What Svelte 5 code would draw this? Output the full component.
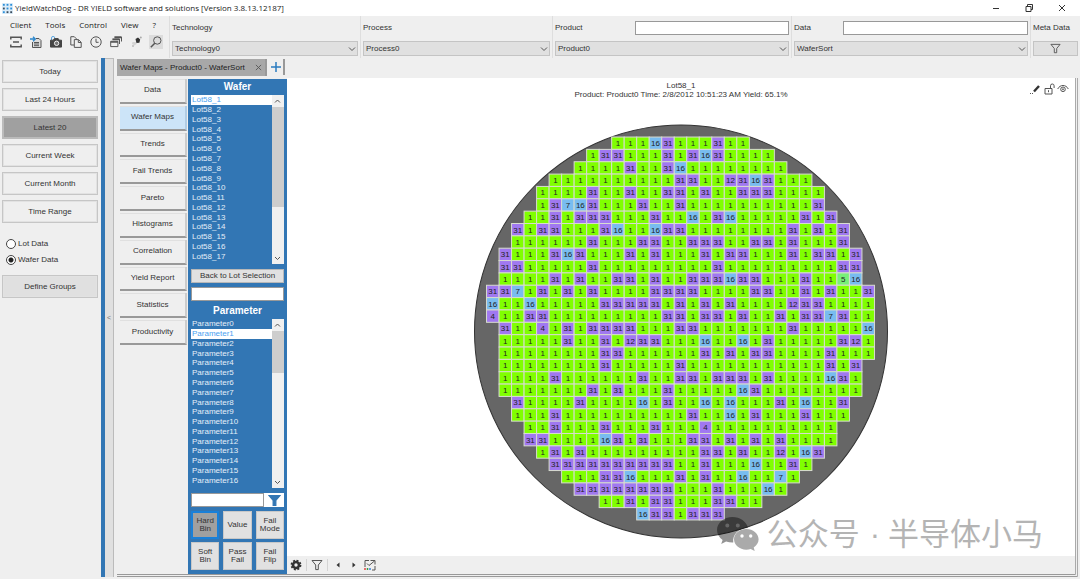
<script lang="ts">
	const menus = ['Client', 'Tools', 'Control', 'View', '?'];
	const ranges = ['Today', 'Last 24 Hours', 'Latest 20', 'Current Week', 'Current Month', 'Time Range'];
	const pages = [
		'Data',
		'Wafer Maps',
		'Trends',
		'Fail Trends',
		'Pareto',
		'Histograms',
		'Correlation',
		'Yield Report',
		'Statistics',
		'Productivity'
	];
	const modes = ['Hard Bin', 'Value', 'Fail Mode', 'Soft Bin', 'Pass Fail', 'Fail Flip'];

	const filters = [
		{ label: 'Technology', value: 'Technology0', search: false },
		{ label: 'Process', value: 'Process0', search: false },
		{ label: 'Product', value: 'Product0', search: true },
		{ label: 'Data', value: 'WaferSort', search: true }
	];

	const wafers = Array.from({ length: 18 }, (_, i) => `Lot58_${i + 1}`);
	const parameters = Array.from({ length: 18 }, (_, i) => `Parameter${i}`);

	let range = $state('Latest 20');
	let page = $state('Wafer Maps');
	let mode = $state('Hard Bin');
	let wafer = $state('Lot58_1');
	let parameter = $state('Parameter1');
	let level = $state('wafer');

	// hard bins per row, [first column, bins]
	const rows: [number, string][] = [
		[10, '1 1 1 16 31 1 1 1 31 1 1'],
		[8, '1 31 31 1 1 1 31 1 31 16 31 1 1 1 1'],
		[7, '1 1 1 1 31 1 1 31 16 1 1 1 1 1 1 1 1'],
		[5, '1 1 1 1 1 1 1 1 1 1 31 31 1 1 12 31 16 31 1 1 1'],
		[4, '1 1 1 1 31 1 1 31 1 1 31 31 1 31 1 1 31 31 31 1 1 1 1'],
		[4, '1 31 7 16 31 1 1 1 31 1 1 31 1 1 1 1 1 1 1 1 1 1 31'],
		[3, '1 1 31 1 31 31 31 1 1 1 31 1 1 16 1 31 16 1 1 1 1 1 31 1 31'],
		[2, '31 1 31 31 1 1 1 31 16 1 1 16 31 31 1 1 1 1 1 1 1 1 31 1 31 1 31'],
		[2, '1 1 1 1 1 1 31 1 1 1 31 31 1 1 31 31 31 1 1 31 31 1 31 1 1 1 31'],
		[1, '31 1 1 1 31 16 31 1 1 1 31 1 31 1 1 1 31 1 31 31 1 1 1 31 1 31 31 1 31'],
		[1, '31 31 1 1 1 1 1 31 1 1 1 1 1 1 1 1 1 31 1 1 1 1 1 1 1 1 1 31 31'],
		[1, '1 1 1 1 31 1 31 1 1 31 31 1 31 1 1 31 31 31 16 31 31 1 1 1 31 1 1 5 16'],
		[0, '31 31 7 1 31 1 31 1 31 1 1 1 1 31 31 31 31 1 1 1 1 31 31 1 1 31 1 31 1 1 31'],
		[0, '16 1 1 16 1 1 1 1 1 31 31 31 31 31 1 31 1 31 1 31 1 1 1 1 12 31 31 1 1 1 1'],
		[0, '4 1 1 31 31 1 1 1 1 1 1 1 1 1 31 31 1 31 31 1 31 1 1 31 1 31 31 7 31 1 1'],
		[1, '31 1 1 4 1 31 1 31 31 31 31 1 1 1 31 31 1 1 1 1 1 1 1 31 1 1 1 1 1 16'],
		[1, '1 1 1 1 1 31 1 1 31 1 12 31 31 1 1 1 16 1 1 16 1 31 1 1 1 1 1 31 12 1'],
		[1, '1 1 1 1 1 1 1 1 31 31 1 1 1 1 1 1 31 1 31 1 31 31 1 1 1 1 31 1 1 1'],
		[1, '1 1 1 1 1 1 1 1 31 1 1 1 1 1 31 1 1 1 1 1 1 1 1 1 1 1 31 1 31'],
		[1, '1 1 1 1 31 1 1 1 1 1 1 31 1 1 31 31 1 31 31 31 1 31 1 1 1 1 16 31 1'],
		[1, '1 1 1 1 1 1 1 31 1 31 1 1 1 31 1 1 1 1 1 16 31 1 1 1 1 1 1 1 1'],
		[2, '31 1 1 1 1 31 1 1 1 1 16 1 31 1 1 16 1 16 1 1 1 31 1 16 1 1 31'],
		[2, '1 1 1 31 1 1 1 1 1 1 1 1 1 1 31 1 1 16 1 31 1 1 1 31 1 1 1'],
		[3, '1 1 31 1 1 1 31 1 1 1 31 1 1 1 4 1 1 1 1 1 1 1 1 1 1'],
		[3, '31 31 1 1 1 1 16 31 1 31 1 1 1 31 31 1 31 1 31 1 31 1 1 1 1'],
		[4, '1 31 1 31 1 1 1 1 1 1 1 1 1 31 31 1 31 1 1 12 1 16 31'],
		[5, '31 31 31 31 31 31 31 31 31 31 1 1 31 1 1 1 16 1 1 31 1'],
		[6, '1 1 1 31 31 16 1 1 1 31 1 31 1 1 16 1 1 7 1'],
		[7, '31 31 31 31 31 31 31 31 1 1 1 31 1 1 1 16 1'],
		[9, '1 1 31 1 31 31 1 1 1 31 31 1 1'],
		[12, '16 31 31 1 31 31 31']
	];

	const binColors: Record<string, string> = {
		'1': '#80ff00',
		'4': '#a078f0',
		'5': '#78f078',
		'7': '#78bcf0',
		'12': '#a078f0',
		'16': '#78bcf0',
		'31': '#a078f0'
	};

	const DIE_W = 387 / 31;
	const DIE_H = 382 / 31;

	const dies = rows.flatMap(([first, bins], row) =>
		bins.split(' ').map((bin, i) => ({
			bin,
			x: 13 + (first + i) * DIE_W,
			y: 13 + row * DIE_H
		}))
	);
</script>

{#snippet funnel()}
	<svg class="icon" viewBox="0 0 12 12"><path d="M1 1.5h10L7.3 6v4.6H4.7V6z" /></svg>
{/snippet}

{#snippet scrollbar(thumb: number)}
	<div class="scrollbar">
		<svg viewBox="0 0 11 12"><path d="M3 7.5 5.5 5 8 7.5" /></svg>
		<div class="track"><div class="thumb" style="height: {thumb}%"></div></div>
		<svg viewBox="0 0 11 12"><path d="M3 5 5.5 7.5 8 5" /></svg>
	</div>
{/snippet}

<div class="app">
	<header class="titlebar">
		<svg class="logo" viewBox="0 0 12 12">
			<rect width="12" height="12" fill="#dcecf8" />
			<g fill="#2d8fd8">
				<rect x="1" y="1" width="2" height="2" /><rect x="5" y="1" width="2" height="2" />
				<rect x="9" y="1" width="2" height="2" /><rect x="5" y="5" width="2" height="2" />
				<rect x="9" y="5" width="2" height="2" /><rect x="1" y="9" width="2" height="2" />
			</g>
			<g fill="#3a4a5a">
				<rect x="1" y="5" width="2" height="2" /><rect x="5" y="9" width="2" height="2" />
				<rect x="9" y="9" width="2" height="2" />
			</g>
		</svg>
		<h1>YieldWatchDog - DR YIELD software and solutions [Version 3.8.13.12187]</h1>
		<div class="window-buttons">
			<button aria-label="Minimize"><svg viewBox="0 0 8 8"><path d="M1 4.5h6" /></svg></button>
			<button aria-label="Restore">
				<svg viewBox="0 0 8 8"><path d="M1 2.5h5v5H1zM2.5 2.5v-2h5v5H6" /></svg>
			</button>
			<button aria-label="Close"><svg viewBox="0 0 8 8"><path d="m1 1 6 6M7 1 1 7" /></svg></button>
		</div>
	</header>

	<div class="ribbon">
		<div class="commands">
			<nav class="menus">
				{#each menus as menu}
					<button>{menu}</button>
				{/each}
			</nav>
			<div class="toolbar">
				<button aria-label="Layout">
					<svg viewBox="0 0 12 12" stroke-width="1.5"><path d="M.8 3.6V1.2h10.4v2.4M3 6h6M.8 8.4v2.4h10.4V8.4" /></svg>
				</button>
				<button aria-label="Import">
					<svg viewBox="0 0 12 12">
						<path d="M6 2.5h3l2 2v7H2.5V6" fill="#ddd" />
						<path d="M4 6.5h5M4 8h5M4 9.7h5" />
						<path d="M0 3h5M3 .8 5.3 3 3 5.2" stroke="#2b86cc" stroke-width="1.3" />
					</svg>
				</button>
				<button aria-label="Snapshot">
					<svg viewBox="0 0 12 12">
						<path d="M1.5 4V2a1.5 1.5 0 0 1 3.2 0" stroke="#5aa5e0" />
						<path d="M.5 4.2h2.8l1-1.6h3.9l1 1.6h2.3v6.9H.5z" fill="#444" stroke="#444" />
						<circle cx="6.6" cy="7.3" r="2.2" fill="#777" stroke="#efefef" />
					</svg>
				</button>
				<button aria-label="Copy">
					<svg viewBox="0 0 12 12">
						<path d="M4 9H.8V.7h3.5l2.2 2.2v1" />
						<path d="M4.3 3.6h4.2l2.7 2.7v5.1H4.3zM8.3 3.8v2.7h2.7" fill="#efefef" />
					</svg>
				</button>
				<button aria-label="History">
					<svg viewBox="0 0 12 12"><circle cx="6" cy="6" r="5.2" /><path d="M6 2.7v3.6h2.6" /></svg>
				</button>
				<button aria-label="Windows">
					<svg viewBox="0 0 12 12">
						<path d="M4.5 1h7v4.5M2.5 3h7v5" />
						<path d="M.7 5.3h7.2v5.3H.7z" fill="#efefef" /><path d="M.7 6h7.2M4.5 1.4h7M2.5 3.5h7" stroke-width="1.6" />
					</svg>
				</button>
				<button aria-label="Highlight">
					<svg viewBox="0 0 12 12">
						<g stroke="none">
							<path d="M5.5 3 8 1.5l2.2 2-.8 3.200-3 .3z" fill="#333" />
							<path d="M2.5 6h3L7 7.500 4.500 9.500 2 8z" fill="#d4d4d4" />
							<circle cx="3" cy="10" r="1" fill="#bbb" /><circle cx="10.8" cy="1.6" r="1" fill="#aaa" />
						</g>
					</svg>
				</button>
				<button class="pressed" aria-label="Search">
					<svg viewBox="0 0 12 12"><circle cx="7.3" cy="4.5" r="3.7" /><path d="M4.8 7.2.8 11.2" stroke-width="1.5" /></svg>
				</button>
			</div>
		</div>

		{#each filters as filter}
			<div class="filter">
				<div class="filter-head" class:short={filter.label.length < 5}>
					<label for="select-{filter.label}">{filter.label}</label>
					{#if filter.search}
						<input type="text" aria-label="Search {filter.label}" />
					{/if}
				</div>
				<div class="select">
					<select id="select-{filter.label}">
						<option>{filter.value}</option>
					</select>
					<svg viewBox="0 0 8 8"><path d="m1 2.5 3 3 3-3" /></svg>
				</div>
			</div>
		{/each}
		<div class="filter">
			<div class="filter-head"><span>Meta Data</span></div>
			<button class="meta" aria-label="Filter meta data">{@render funnel()}</button>
		</div>
	</div>

	<div class="body">
		<aside class="sidebar">
			{#each ranges as item}
				<button class:active={range === item} onclick={() => (range = item)}>{item}</button>
			{/each}
			<div class="levels">
				<label><input type="radio" name="level" value="lot" bind:group={level} />Lot Data</label>
				<label><input type="radio" name="level" value="wafer" bind:group={level} />Wafer Data</label>
			</div>
			<button class="groups">Define Groups</button>
		</aside>

		<button class="splitter" aria-label="Collapse sidebar">&lt;</button>

		<main>
			<div class="tabs">
				<div class="tab">
					<span>Wafer Maps - Product0 - WaferSort</span>
					<button aria-label="Close tab"><svg viewBox="0 0 8 8"><path d="m1 1 6 6M7 1 1 7" /></svg></button>
				</div>
				<button class="add" aria-label="New tab"><svg viewBox="0 0 10 10"><path d="M5 0v10M0 5h10" /></svg></button>
			</div>

			<div class="pane">
				<nav class="pages">
					{#each pages as item}
						<button class:active={page === item} onclick={() => (page = item)}>{item}</button>
					{/each}
				</nav>

				<section class="selection">
					<h2>Wafer</h2>
					<div class="listbox">
						<ul>
							{#each wafers as item}
								<li><button class:active={wafer === item} onclick={() => (wafer = item)}>{item}</button></li>
							{/each}
						</ul>
						{@render scrollbar(69)}
					</div>
					<button class="back">Back to Lot Selection</button>
					<input type="text" aria-label="Search wafer" />
					<h2 class="second">Parameter</h2>
					<div class="listbox">
						<ul>
							{#each parameters as item}
								<li>
									<button class:active={parameter === item} onclick={() => (parameter = item)}>{item}</button>
								</li>
							{/each}
						</ul>
						{@render scrollbar(29)}
					</div>
					<div class="param-search">
						<input type="text" aria-label="Search parameter" />
						<button aria-label="Filter parameters">{@render funnel()}</button>
					</div>
					<div class="modes">
						{#each modes as item}
							<button class:active={mode === item} onclick={() => (mode = item)}>{item}</button>
						{/each}
					</div>
				</section>

				<section class="chart">
					<div class="canvas">
						<div class="caption">
							<div>{wafer}</div>
							<div>Product: Product0 Time: 2/8/2012 10:51:23 AM Yield: 65.1%</div>
						</div>
						<div class="chart-tools">
							<button aria-label="Edit">
								<svg viewBox="0 0 12 12"><path d="M1 10.5h1M3 10.5h1" /><path d="m5 8.5 5-5.5" stroke="#333" stroke-width="2.4" /></svg>
							</button>
							<button aria-label="Unlock">
								<svg viewBox="0 0 12 12"><path d="M2 5.5h7v5.5H2zM5.5 7.2v2M7.5 5.5V2.8a1.8 1.8 0 0 1 3.6 0V5" /></svg>
							</button>
							<button aria-label="Show">
								<svg viewBox="0 0 12 12"><path d="M.7 6C3 1.3 9 1.3 11.3 6" /><circle cx="6" cy="6.3" r="2.3" /><circle cx="6" cy="6.3" r=".6" /></svg>
							</button>
						</div>
						<svg class="wafer" viewBox="0 0 414 414" role="img" aria-label="Wafer map">
							<circle cx="207" cy="207" r="206" />
							{#each dies as die}
								<rect x={die.x} y={die.y} width={DIE_W} height={DIE_H} fill={binColors[die.bin]} />
								<text x={die.x + DIE_W / 2} y={die.y + 9}>{die.bin}</text>
							{/each}
						</svg>
						<div class="watermark">
							<svg viewBox="0 0 42 34">
								<path
									fill="#000"
									fill-opacity=".42"
									fill-rule="evenodd"
									d="M15.5 0C7 0 0 5.8 0 13c0 4 2.2 7.5 5.6 9.9L4.2 27l4.9-2.4c2 .6 4 .9 6.4.9h.8C15 17.5 22 10.8 31 10.9 29.5 4.5 23 0 15.5 0zM10.3 6.5a2 2 0 1 1 0 4 2 2 0 0 1 0-4zm10.5 0a2 2 0 1 1 0 4 2 2 0 0 1 0-4z"
								/>
								<path
									fill="#aaa"
									fill-rule="evenodd"
									d="M29.3 12C22.5 12 17 16.6 17 22.3s5.5 10.4 12.3 10.4c1.6 0 3-.2 4.4-.7l4 2-1-3.5c3-2 4.9-4.9 4.9-8.2C41.6 16.6 36 12 29.3 12zM25 17.3a1.7 1.7 0 1 1 0 3.4 1.7 1.7 0 0 1 0-3.4zm8.7 0a1.7 1.7 0 1 1 0 3.4 1.7 1.7 0 0 1 0-3.4z"
								/>
							</svg>
							<span>公众号<span class="dot">·</span>半导体小马</span>
						</div>
					</div>
					<div class="statusbar">
						<button aria-label="Settings">
							<svg viewBox="0 0 12 12"><circle cx="6" cy="6" r="3" stroke="#333" stroke-width="2.6" /><circle cx="6" cy="6" r="4.6" stroke="#333" stroke-width="1.6" stroke-dasharray="2 1.61" /></svg>
						</button>
						<button class="divided" aria-label="Filter">{@render funnel()}</button>
						<button aria-label="Previous"><svg viewBox="0 0 12 12"><path d="M7.5 3.5v5L4.5 6z" fill="#333" stroke="none" /></svg></button>
						<button aria-label="Next"><svg viewBox="0 0 12 12"><path d="M4.5 3.5v5l3-2.5z" fill="#333" stroke="none" /></svg></button>
						<button aria-label="Chart options">
							<svg viewBox="0 0 12 12">
								<path d="M5 1.5H1V8M6.5 1.5H11v4M3 4.5l2 2L10.5 2M11 7v4H8" />
								<path d="M1 9v2" stroke="#e04040" stroke-width="1.5" /><path d="M3.5 9v2" stroke="#3a9a40" stroke-width="1.5" /><path d="M6 9v2" stroke="#3a80e0" stroke-width="1.5" />
							</svg>
						</button>
					</div>
				</section>
			</div>
		</main>
	</div>
</div>

<style>
	:global(body) {
		margin: 0;
	}

	.app {
		display: flex;
		flex-direction: column;
		min-height: 100vh;
		background: #efefef;
		color: #333;
		font: 8px/10px 'Liberation Sans', Arial, sans-serif;
	}

	.app * {
		box-sizing: border-box;
	}

	button,
	input,
	select {
		margin: 0;
		padding: 0;
		border: 0;
		border-radius: 0;
		background: none;
		color: inherit;
		font: inherit;
	}

	svg {
		display: block;
		fill: none;
		stroke: #555;
	}

	.titlebar {
		display: flex;
		align-items: center;
		gap: 2px;
		height: 16px;
		padding: 0 14px 0 2px;
		background: #fff;
	}

	.logo {
		width: 11px;
		height: 11px;
		stroke: none;
	}

	h1 {
		flex: 1;
		margin: 0;
		color: #222;
		font: 8px/16px 'Open Sans', 'Noto Sans', sans-serif;
	}

	.window-buttons {
		display: flex;
		gap: 25px;
	}

	.window-buttons svg {
		width: 8px;
		height: 8px;
		stroke: #333;
	}

	.ribbon {
		display: grid;
		grid-template-columns: 169px 191fr 192fr 239fr 239fr 50px;
		height: 42px;
	}

	.commands {
		padding: 1px 6px 0 5px;
	}

	.menus {
		display: flex;
		gap: 14px;
		padding-left: 5px;
		font: 8px/15px 'Open Sans', 'Noto Sans', sans-serif;
		color: #222;
	}

	.toolbar {
		display: flex;
		justify-content: space-between;
		margin-top: 3px;
		padding-left: 4px;
	}

	.toolbar button {
		display: grid;
		place-items: center;
		width: 14px;
		height: 14px;
	}

	.toolbar .pressed {
		background: #dcdcdc;
	}

	.toolbar svg {
		width: 12px;
		height: 12px;
	}

	.filter {
		min-width: 0;
		padding: 5px 2px 0;
		border-left: 1px solid #dedede;
	}

	.filter-head {
		display: flex;
		align-items: center;
		height: 14px;
		white-space: nowrap;
	}

	.filter-head label {
		width: 34%;
	}

	.short label {
		width: 21%;
	}

	.filter-head input {
		flex: 1;
		min-width: 0;
		height: 14px;
		border: 1px solid #999;
		background: #fff;
	}

	.select {
		position: relative;
		margin-top: 6px;
	}

	.select select {
		display: block;
		width: 100%;
		height: 15px;
		padding-left: 2px;
		border: 1px solid #c4c4c4;
		background: #e0e0e0;
		appearance: none;
	}

	.select svg {
		position: absolute;
		top: 4px;
		right: 2px;
		width: 8px;
		height: 8px;
		pointer-events: none;
	}

	.meta {
		display: grid;
		place-items: center;
		width: 100%;
		height: 15px;
		margin-top: 6px;
		border: 1px solid #c4c4c4;
		background: #e0e0e0;
	}

	.icon {
		width: 11px;
		height: 11px;
	}

	.body {
		display: flex;
		flex: 1;
	}

	.sidebar {
		display: flex;
		flex-direction: column;
		gap: 5px;
		width: 101px;
		padding: 2px 3px 0 2px;
	}

	.sidebar > button {
		height: 23px;
		border: 1px solid #c6c6c6;
		box-shadow: inset 0 0 0 1px #e2e2e2;
	}

	.sidebar > .active {
		border-color: #bbb;
		background: #a0a0a0;
		box-shadow: inset 0 0 0 1px #bbb;
	}

	.sidebar > .groups {
		background: #e0e0e0;
	}

	.levels {
		display: flex;
		flex-direction: column;
		gap: 4px;
		margin: 10px 0 4px 4px;
	}

	.levels label {
		display: flex;
		align-items: center;
		gap: 2px;
		height: 12px;
	}

	.levels input {
		width: 10px;
		height: 10px;
		border: 1px solid #444;
		border-radius: 50%;
		background: #fff;
		appearance: none;
	}

	.levels input:checked {
		background: radial-gradient(#222 0 2px, #fff 3px);
	}

	.splitter {
		width: 13px;
		margin-bottom: 2px;
		border-left: 4px solid #3276b4;
		border-right: 1px solid #bbb;
		background: #e0e0e0;
		box-shadow: inset 0 1px #bbb;
		color: #777;
		font-size: 7px;
	}

	main {
		display: flex;
		flex: 1;
		flex-direction: column;
		min-width: 0;
		padding: 0 2px 2px 3px;
	}

	.tabs {
		display: flex;
		gap: 3px;
		height: 20px;
		padding-top: 1px;
	}

	.tab {
		display: flex;
		align-items: center;
		gap: 10px;
		height: 17px;
		padding: 0 3px;
		border-right: 2px solid #999;
		background: #a8a8a8;
		color: #222;
	}

	.tab svg {
		width: 7px;
		height: 7px;
	}

	.add {
		height: 16px;
		padding: 0 2px 0 1px;
		border-right: 2px solid #999;
	}

	.add svg {
		width: 10px;
		height: 10px;
		stroke: #2b7cc0;
		stroke-width: 1.5;
	}

	.pane {
		display: flex;
		flex: 1;
		border-right: 3px double #aaa;
		border-bottom: 3px double #999;
	}

	.pages {
		display: grid;
		grid-auto-rows: 1fr;
		gap: 2px;
		width: 71px;
		height: 267px;
		padding: 1px 1px 0 3px;
	}

	.pages button {
		border-right: 2px solid #ccc;
		border-bottom: 2px solid #999;
		box-shadow: inset 0 1px #e0e0e0;
	}

	.pages .active {
		background: #cce4f8;
		border-right-color: #b0cce4;
	}

	.selection {
		display: flex;
		flex-direction: column;
		width: 99px;
		margin-top: 1px;
		padding: 0 3px 2px;
		background: #3276b4;
	}

	h2 {
		margin: 0;
		color: #fff;
		font-size: 10px;
		font-weight: bold;
		line-height: 16px;
		text-align: center;
	}

	.second {
		margin-top: 2px;
	}

	.listbox {
		display: flex;
		height: 169px;
		overflow: hidden;
	}

	.listbox ul {
		display: grid;
		grid-auto-rows: 1fr;
		flex: 1;
		height: 176px;
		margin: 0;
		padding: 0;
		color: #e4eef8;
		list-style: none;
	}

	.listbox li {
		display: grid;
		min-height: 0;
	}

	.listbox button {
		padding-left: 1px;
		line-height: 9px;
		text-align: left;
	}

	.listbox .active {
		background: #fff;
		color: #4a9ff0;
	}

	.scrollbar {
		display: flex;
		flex-direction: column;
		width: 12px;
		background: #f0f0f0;
	}

	.scrollbar svg {
		width: 11px;
		height: 12px;
	}

	.track {
		flex: 1;
	}

	.thumb {
		background: #cdcdcd;
	}

	.back {
		height: 14px;
		margin-top: 5px;
		border: 1px solid #b8b8b8;
		background: #e1e1e1;
	}

	.selection input {
		width: 100%;
		height: 14px;
		border: 1px solid #999;
		background: #fff;
	}

	.back + input {
		margin-top: 4px;
	}

	.param-search {
		display: flex;
		margin-top: 5px;
	}

	.param-search input {
		flex: 1;
		min-width: 0;
	}

	.param-search button {
		display: grid;
		place-items: center;
		width: 20px;
		background: #fff;
	}

	.param-search .icon {
		width: 13px;
		height: 13px;
	}

	.param-search .icon path {
		fill: #3276b4;
		stroke: #3276b4;
	}

	.modes {
		display: grid;
		grid-template-columns: repeat(3, 1fr);
		gap: 3px 4px;
		margin-top: 4px;
	}

	.modes button {
		height: 28px;
		padding: 0 3px;
		border: 1px solid #c8c8c8;
		background: #e1e1e1;
		line-height: 8px;
	}

	.modes .active {
		border: 2px solid #1a80d8;
		background: #a0a0a0;
		padding: 0 2px;
	}

	.chart {
		display: flex;
		flex: 1;
		flex-direction: column;
		min-width: 0;
	}

	.canvas {
		position: relative;
		display: flex;
		flex: 1;
		flex-direction: column;
		padding: 3px 0 17px;
		background: #fff;
	}

	.caption {
		line-height: 9px;
		text-align: center;
	}

	.chart-tools {
		position: absolute;
		top: 5px;
		right: 6px;
		display: flex;
		gap: 2px;
	}

	.chart-tools svg {
		width: 12px;
		height: 12px;
	}

	.wafer {
		flex: 1 1 0;
		width: 100%;
		min-height: 0;
		margin-top: 25px;
	}

	.wafer circle {
		fill: #666;
		stroke: #333;
	}

	.wafer rect {
		stroke: #d8dcd0;
		stroke-width: 1;
	}

	.wafer text {
		fill: #222;
		stroke: none;
		font-size: 8px;
		text-anchor: middle;
	}

	.watermark {
		position: absolute;
		right: 32px;
		bottom: 2px;
		display: flex;
		align-items: center;
		gap: 8px;
		color: #b4b4b4;
		font: 31px/38px 'Noto Sans CJK SC', sans-serif;
		white-space: nowrap;
	}

	.watermark svg {
		width: 42px;
		height: 34px;
		stroke: none;
	}

	.dot {
		padding: 0 8px 0 10px;
		font-family: 'Liberation Sans', Arial, sans-serif;
	}

	.statusbar {
		display: flex;
		align-items: center;
		gap: 4px;
		height: 18px;
		padding-left: 3px;
	}

	.statusbar svg {
		width: 12px;
		height: 12px;
	}

	.divided {
		padding: 0 4px;
		border-right: 1px solid #d4d4d4;
		border-left: 1px solid #d4d4d4;
	}
</style>
